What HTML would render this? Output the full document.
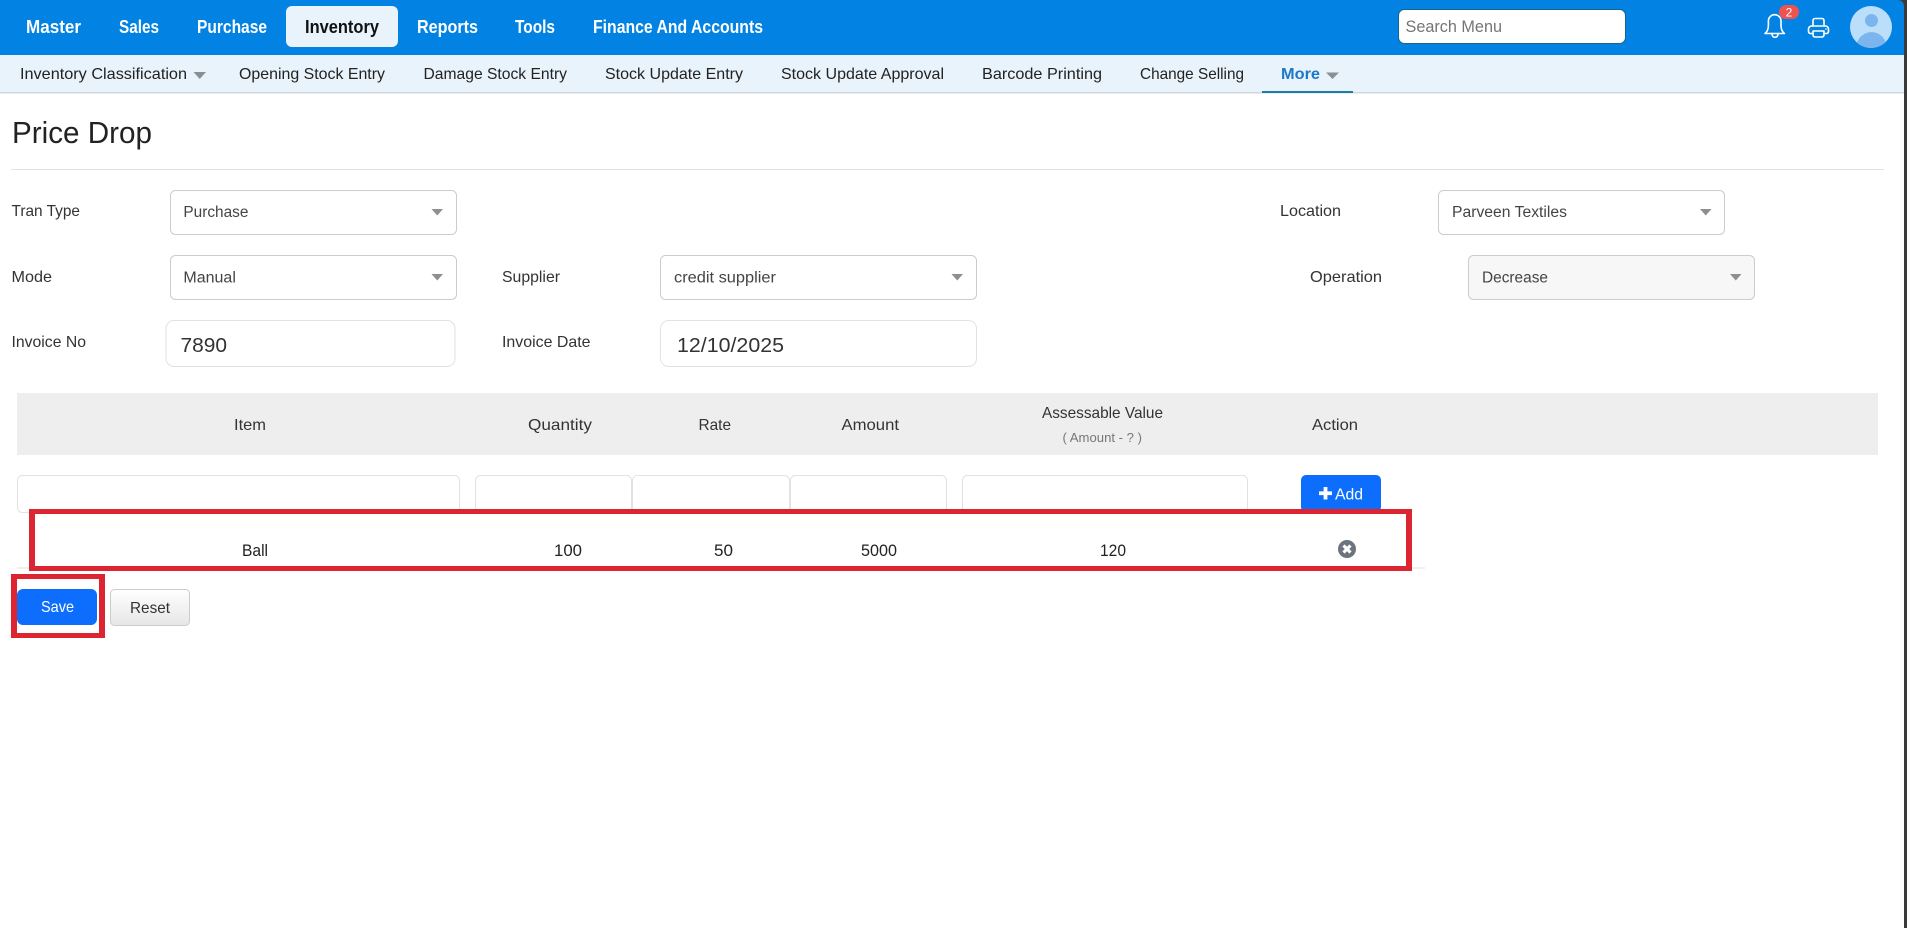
<!DOCTYPE html>
<html lang="en"><head><meta charset="utf-8"><title>Price Drop</title>
<style>
html,body{margin:0;padding:0;background:#fff;width:1907px;height:928px;overflow:hidden}
svg{display:block}
text{font-family:"Liberation Sans",sans-serif;fill:#2b2b2b;white-space:pre}
.n{font-size:18.5px;font-weight:700;fill:#fff}
.s{font-size:16px;fill:#222}
.l{font-size:16px;fill:#333}
.v{font-size:15.5px;fill:#444}
.b{font-size:20.5px;fill:#333}
.h{font-size:16px;fill:#333}
.d{font-size:16.5px;fill:#222}
</style></head><body>
<svg width="1907" height="928" viewBox="0 0 1907 928" xmlns="http://www.w3.org/2000/svg">
<rect width="1907" height="928" fill="#fff"/>
<!-- top bar -->
<rect width="1907" height="55" fill="#0283e4"/>
<rect x="286" y="6" width="112" height="41" rx="6" fill="#e9f3fb"/>
<text class="n" x="26" y="33" textLength="55" lengthAdjust="spacingAndGlyphs">Master</text>
<text class="n" x="119" y="33" textLength="40" lengthAdjust="spacingAndGlyphs">Sales</text>
<text class="n" x="197" y="33" textLength="70" lengthAdjust="spacingAndGlyphs">Purchase</text>
<text class="n" x="305" y="33" textLength="74" lengthAdjust="spacingAndGlyphs" style="fill:#111">Inventory</text>
<text class="n" x="417" y="33" textLength="61" lengthAdjust="spacingAndGlyphs">Reports</text>
<text class="n" x="515" y="33" textLength="40" lengthAdjust="spacingAndGlyphs">Tools</text>
<text class="n" x="593" y="33" textLength="170" lengthAdjust="spacingAndGlyphs">Finance And Accounts</text>
<!-- search -->
<rect x="1398.5" y="9.5" width="227" height="34" rx="6" fill="#fff" stroke="#17648c"/>
<text x="1405.5" y="32" textLength="96.5" lengthAdjust="spacingAndGlyphs" style="font-size:16.5px;fill:#757575">Search Menu</text>
<!-- bell -->
<g fill="none" stroke="#fff" stroke-width="1.6" stroke-linecap="round" stroke-linejoin="round">
<path d="M1765 33.5c2.4-2 3.4-4.5 3.4-8v-4.500a6.300 6.300 0 0 1 12.600 0v4.500c0 3.500 1 6 3.400 8z"/>
<path d="M1772 33.5v.8a3 3 0 0 0 6 0v-.8"/>
</g>
<rect x="1779" y="5" width="20" height="14" rx="7" fill="#ef5350"/>
<text x="1789" y="16.5" text-anchor="middle" style="font-size:12px;fill:#fff">2</text>
<!-- printer -->
<g fill="none" stroke="#fff" stroke-width="1.6" stroke-linejoin="round" stroke-linecap="round">
<path d="M1813 26v-5.500a2 2 0 0 1 2-2h7a2 2 0 0 1 2 2V26"/>
<path d="M1813 33.500h-2.500a2 2 0 0 1-2-2V29a3 3 0 0 1 3-3h14a3 3 0 0 1 3 3v2.500a2 2 0 0 1-2 2H1824"/>
<path d="M1813 31h11v4a2 2 0 0 1-2 2h-7a2 2 0 0 1-2-2z"/>
</g>
<circle cx="1826" cy="29" r=".8" fill="#fff"/>
<!-- avatar -->
<clipPath id="av"><circle cx="1871" cy="27" r="21"/></clipPath>
<circle cx="1871" cy="27" r="21" fill="#bbdefb"/>
<g clip-path="url(#av)" fill="#7cb5ee">
<circle cx="1871.5" cy="20.500" r="6.500"/>
<ellipse cx="1871.5" cy="50" rx="16" ry="18"/>
</g>
<!-- sub bar -->
<rect y="55" width="1907" height="37" fill="#e9f3fb"/>
<rect y="92" width="1907" height="1.500" fill="#d0d8de"/>
<text class="s" x="20" y="79" textLength="167" lengthAdjust="spacingAndGlyphs">Inventory Classification</text>
<path d="M193.500 72h12.500l-6.250 7z" fill="#8a8f94"/>
<text class="s" x="239" y="79" textLength="146" lengthAdjust="spacingAndGlyphs">Opening Stock Entry</text>
<text class="s" x="423.500" y="79" textLength="143.500" lengthAdjust="spacingAndGlyphs">Damage Stock Entry</text>
<text class="s" x="605" y="79" textLength="138" lengthAdjust="spacingAndGlyphs">Stock Update Entry</text>
<text class="s" x="781" y="79" textLength="163" lengthAdjust="spacingAndGlyphs">Stock Update Approval</text>
<text class="s" x="982" y="79" textLength="120" lengthAdjust="spacingAndGlyphs">Barcode Printing</text>
<text class="s" x="1140" y="79" textLength="104" lengthAdjust="spacingAndGlyphs">Change Selling</text>
<text class="s" x="1281" y="79" textLength="39" lengthAdjust="spacingAndGlyphs" style="fill:#1e78c8;font-weight:700">More</text>
<path d="M1326 72.500h13l-6.500 6.500z" fill="#8a8f94"/>
<rect x="1262" y="91" width="91" height="2" fill="#1b7ea6"/>
<!-- title -->
<text x="12" y="143" textLength="140" lengthAdjust="spacingAndGlyphs" style="font-size:31px;fill:#222">Price Drop</text>
<rect x="11" y="169" width="1873" height="1" fill="#e2e2e2"/>
<!-- form row 1 -->
<text class="l" x="11.500" y="216" textLength="68.500" lengthAdjust="spacingAndGlyphs">Tran Type</text>
<rect x="170.500" y="190.500" width="286" height="44" rx="5" fill="#fff" stroke="#ccc"/>
<text class="v" x="183.400" y="217" textLength="65" lengthAdjust="spacingAndGlyphs">Purchase</text>
<path d="M431.500 209h11.500l-5.750 6.500z" fill="#8f8f8f"/>
<text class="l" x="1280" y="216" textLength="61" lengthAdjust="spacingAndGlyphs">Location</text>
<rect x="1438.500" y="190.500" width="286" height="44" rx="5" fill="#fff" stroke="#ccc"/>
<text class="v" x="1452" y="217" textLength="115" lengthAdjust="spacingAndGlyphs">Parveen Textiles</text>
<path d="M1700 209h11.500l-5.750 6.500z" fill="#8f8f8f"/>
<!-- form row 2 -->
<text class="l" x="11.500" y="282" textLength="40.500" lengthAdjust="spacingAndGlyphs">Mode</text>
<rect x="170.500" y="255.500" width="286" height="44" rx="5" fill="#fff" stroke="#ccc"/>
<text class="v" x="183.400" y="282.500" textLength="52.500" lengthAdjust="spacingAndGlyphs">Manual</text>
<path d="M431.500 274h11.500l-5.750 6.500z" fill="#8f8f8f"/>
<text class="l" x="502" y="282" textLength="58" lengthAdjust="spacingAndGlyphs">Supplier</text>
<rect x="660.500" y="255.500" width="316" height="44" rx="5" fill="#fff" stroke="#ccc"/>
<text class="v" x="674" y="282.500" textLength="102" lengthAdjust="spacingAndGlyphs">credit supplier</text>
<path d="M951.500 274h11.500l-5.750 6.500z" fill="#8f8f8f"/>
<text class="l" x="1310" y="282" textLength="72" lengthAdjust="spacingAndGlyphs">Operation</text>
<rect x="1468.500" y="255.500" width="286" height="44" rx="5" fill="#f7f7f7" stroke="#ccc"/>
<text class="v" x="1482" y="282.500" textLength="66" lengthAdjust="spacingAndGlyphs">Decrease</text>
<path d="M1730 274h11.500l-5.750 6.500z" fill="#8f8f8f"/>
<!-- form row 3 -->
<text class="l" x="11.500" y="347" textLength="74.500" lengthAdjust="spacingAndGlyphs">Invoice No</text>
<rect x="166" y="320.500" width="289" height="46" rx="8" fill="#fff" stroke="#e2e2e2"/>
<text class="b" x="180.500" y="352" textLength="46.500" lengthAdjust="spacingAndGlyphs">7890</text>
<text class="l" x="502" y="347" textLength="88.500" lengthAdjust="spacingAndGlyphs">Invoice Date</text>
<rect x="660.500" y="320.500" width="316" height="46" rx="8" fill="#fff" stroke="#e2e2e2"/>
<text class="b" x="677" y="352" textLength="107" lengthAdjust="spacingAndGlyphs">12/10/2025</text>
<!-- table head -->
<rect x="17" y="393" width="1861" height="62" fill="#eeeeee"/>
<text class="h" x="234" y="430" textLength="32" lengthAdjust="spacingAndGlyphs">Item</text>
<text class="h" x="528" y="430" textLength="64" lengthAdjust="spacingAndGlyphs">Quantity</text>
<text class="h" x="698.500" y="430" textLength="32.500" lengthAdjust="spacingAndGlyphs">Rate</text>
<text class="h" x="841.500" y="430" textLength="57.500" lengthAdjust="spacingAndGlyphs">Amount</text>
<text class="h" x="1042" y="418" textLength="121" lengthAdjust="spacingAndGlyphs">Assessable Value</text>
<text x="1062.500" y="442" textLength="79.500" lengthAdjust="spacingAndGlyphs" style="font-size:13px;fill:#777">( Amount - ? )</text>
<text class="h" x="1312" y="430" textLength="46" lengthAdjust="spacingAndGlyphs">Action</text>
<!-- entry row -->
<g fill="#fff" stroke="#e2e2e2">
<rect x="17.500" y="475.500" width="442" height="37" rx="5"/>
<rect x="475.500" y="475.500" width="156" height="37" rx="5"/>
<rect x="632.500" y="475.500" width="157" height="37" rx="5"/>
<rect x="790.500" y="475.500" width="156" height="37" rx="5"/>
<rect x="962.500" y="475.500" width="285" height="37" rx="5"/>
</g>
<rect x="1301" y="475" width="80" height="37" rx="5" fill="#0d6efd"/>
<path d="M1325.500 487v12.500M1319 493.250h13" stroke="#fff" stroke-width="3.800" fill="none"/>
<text x="1335" y="499.500" textLength="28" lengthAdjust="spacingAndGlyphs" style="font-size:15.500px;fill:#fff">Add</text>
<!-- data row -->
<rect x="17" y="567.500" width="1408" height="1" fill="#e2e2e2"/>
<rect x="29" y="509" width="1383" height="62" fill="#dc2530"/>
<rect x="35" y="514" width="1371" height="52" fill="#fff"/>
<text class="d" x="242" y="556" textLength="26" lengthAdjust="spacingAndGlyphs">Ball</text>
<text class="d" x="554" y="556" textLength="28" lengthAdjust="spacingAndGlyphs">100</text>
<text class="d" x="714" y="556" textLength="19" lengthAdjust="spacingAndGlyphs">50</text>
<text class="d" x="861" y="556" textLength="36" lengthAdjust="spacingAndGlyphs">5000</text>
<text class="d" x="1100" y="556" textLength="26" lengthAdjust="spacingAndGlyphs">120</text>
<circle cx="1347" cy="549" r="9" fill="#6c757d"/>
<path d="M1343.500 545.500l7 7M1350.500 545.500l-7 7" stroke="#fff" stroke-width="3.200" fill="none"/>
<!-- buttons -->
<rect x="11" y="574" width="94" height="64" fill="#dc2530"/>
<rect x="17" y="579" width="82" height="54" fill="#fff"/>
<rect x="17" y="589" width="80" height="36" rx="6" fill="#0d6efd"/>
<text x="41" y="612" textLength="33" lengthAdjust="spacingAndGlyphs" style="font-size:16px;fill:#fff">Save</text>
<linearGradient id="rg" x1="0" y1="0" x2="0" y2="1"><stop offset="0" stop-color="#fff"/><stop offset="1" stop-color="#e6e6e6"/></linearGradient>
<rect x="110.500" y="589.500" width="79" height="36" rx="4" fill="url(#rg)" stroke="#ccc"/>
<text x="130" y="613" textLength="40" lengthAdjust="spacingAndGlyphs" style="font-size:16px;fill:#333">Reset</text>
<!-- window edge -->
<rect x="1904" y="0" width="3" height="928" fill="#3a3a3a"/>
<path d="M1898 0h6v6a6 6 0 0 0-6-6z" fill="#3a3a3a"/>
</svg>
</body></html>
